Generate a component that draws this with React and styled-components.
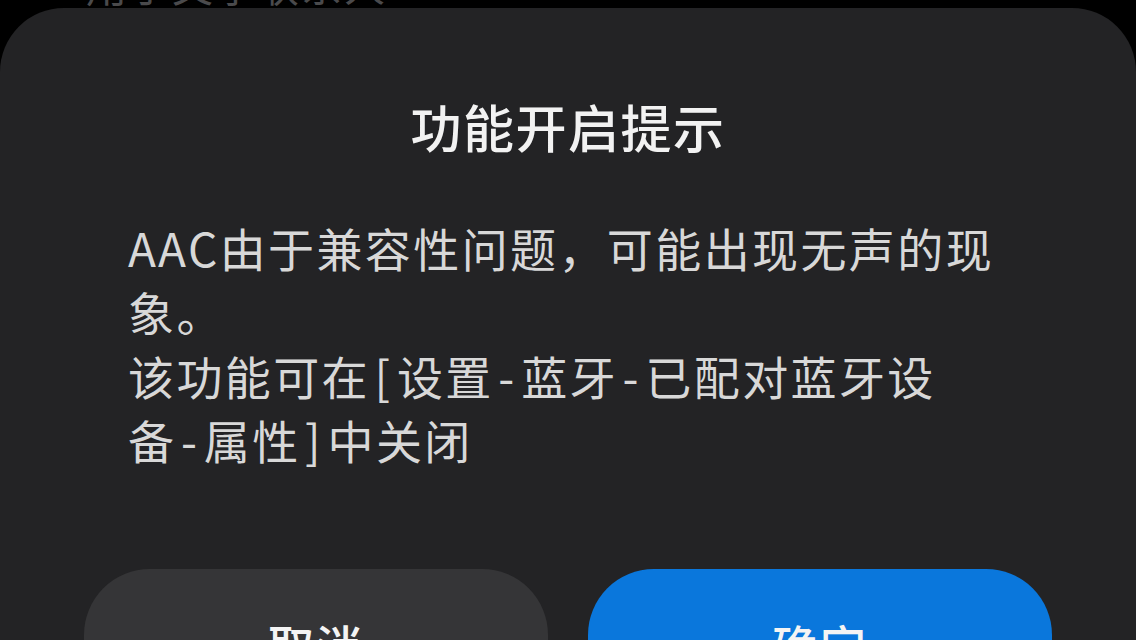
import React from "react";
import styled, { createGlobalStyle } from "styled-components";

const GlobalStyle = createGlobalStyle`
  html, body {
    margin: 0;
    padding: 0;
    background: #000;
  }
  body {
    font-family: "Noto Sans CJK SC", "Noto Sans", sans-serif;
    -webkit-font-smoothing: antialiased;
  }
`;

const Screen = styled.div`
  position: relative;
  width: 1136px;
  height: 640px;
  overflow: hidden;
  background: #000;
`;

const ListBehind = styled.div`
  padding: 0 0 0 86px;
  margin-top: -40px;
`;

const ListItemLabel = styled.div`
  font-size: 41px;
  line-height: 48px;
  letter-spacing: 2px;
  color: #4a4a4c;
`;

/* Bottom sheet that slides over the settings list */
const Sheet = styled.div`
  position: absolute;
  top: 8px;
  left: 0;
  right: 0;
  bottom: 0;
  background: #232325;
  border-radius: 64px 64px 0 0;
  display: flex;
  flex-direction: column;
  padding: 88px 84px 0;
`;

const Title = styled.h2`
  margin: 0;
  text-align: center;
  font-size: 51px;
  line-height: 60px;
  font-weight: 500;
  color: #f2f2f2;
  letter-spacing: 1.5px;
`;

const Message = styled.div`
  margin-top: 59px;
  padding: 0 54px 0 44px;
  display: flex;
  flex-direction: column;
`;

const Paragraph = styled.p`
  margin: 0;
  font-size: 46px;
  line-height: 64px;
  letter-spacing: 2.4px;
  color: #d8d8d8;
  font-weight: 400;
`;

/* Brackets and dashes in the settings path get a little breathing room */
const PathMark = styled.span`
  margin: 0 4.5px;
`;

const Actions = styled.div`
  margin-top: 98px;
  display: grid;
  grid-template-columns: 1fr 1fr;
  gap: 40px;
`;

const ActionButton = styled.button`
  height: 150px;
  border: none;
  border-radius: 66px;
  background: ${(p) => (p.$primary ? "#0a77dc" : "#353537")};
  color: #f4f4f4;
  font-family: inherit;
  font-size: 46px;
  font-weight: 500;
  letter-spacing: 2px;
  display: flex;
  align-items: center;
  justify-content: center;
  cursor: pointer;
`;

const settingsPath = ["设置", "蓝牙", "已配对蓝牙设备", "属性"];

export default function App() {
  return (
    <>
      <GlobalStyle />
      <Screen>
        <ListBehind>
          <ListItemLabel>用于文字联系人</ListItemLabel>
        </ListBehind>
        <Sheet>
          <Title>功能开启提示</Title>
          <Message>
            <Paragraph>AAC由于兼容性问题，可能出现无声的现象。</Paragraph>
            <Paragraph>
              该功能可在<PathMark>[</PathMark>
              {settingsPath.map((step, i) => (
                <React.Fragment key={step}>
                  {i > 0 && <PathMark>-</PathMark>}
                  {step}
                </React.Fragment>
              ))}
              <PathMark>]</PathMark>中关闭
            </Paragraph>
          </Message>
          <Actions>
            <ActionButton>取消</ActionButton>
            <ActionButton $primary>确定</ActionButton>
          </Actions>
        </Sheet>
      </Screen>
    </>
  );
}
